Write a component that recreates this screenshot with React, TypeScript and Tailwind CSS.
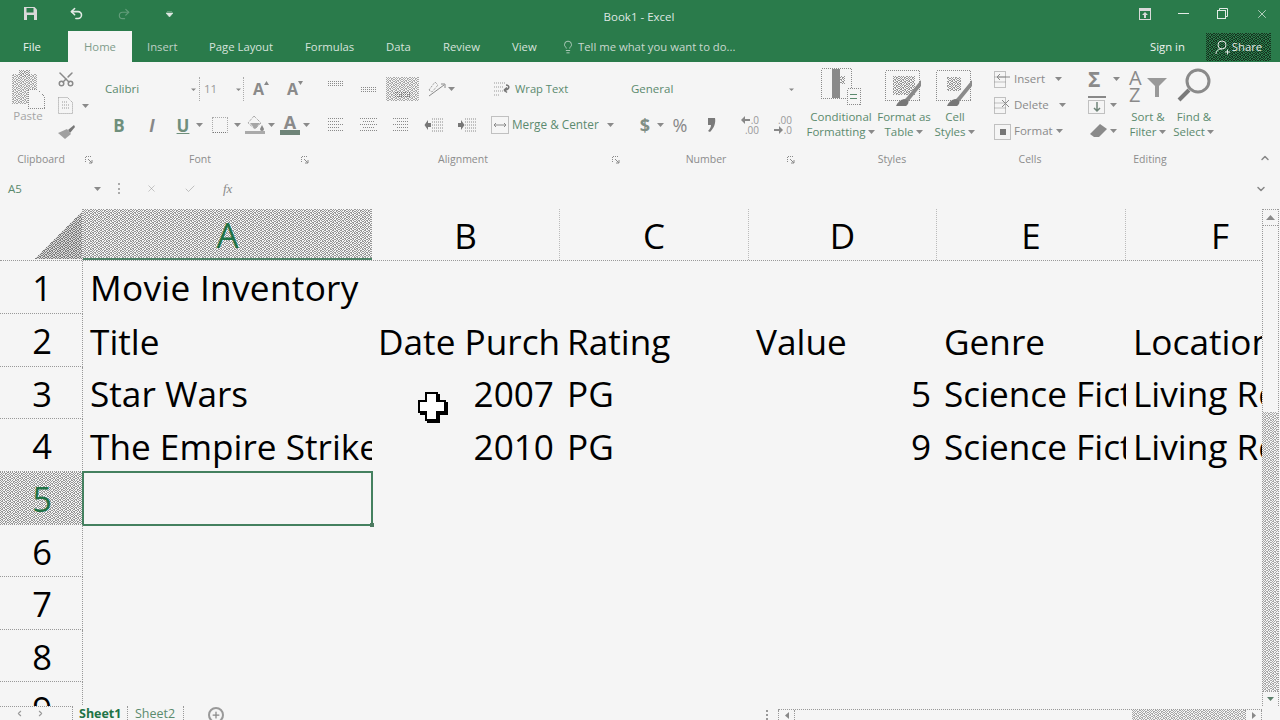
import React from 'react';
import { Scissors, Undo2, Redo2, X, Check, Lightbulb, ChevronUp, ChevronDown, Plus, ChevronLeft, ChevronRight } from 'lucide-react';

const GREY = '#8a8a8a';

// irregular checker, the screenshot is dithered rather than a clean grid
const NOISE = [
  '10101001',
  '01010110',
  '10100101',
  '01011010',
  '10101001',
  '01100110',
  '10011010',
  '01100101',
];

const Tile = ({ id, on, off }: { id: string; on: string; off: string }) => (
  <pattern id={id} width="8" height="8" patternUnits="userSpaceOnUse">
    <rect width="8" height="8" fill={off} />
    {NOISE.map((row, y) =>
      row.split('').map((c, x) => (c === '1' ? <rect key={`${x}-${y}`} x={x} y={y} width="1" height="1" fill={on} /> : null)),
    )}
  </pattern>
);

const Patterns = () => (
  <svg className="absolute w-0 h-0" shapeRendering="crispEdges">
    <defs>
      <Tile id="dith" on="#969696" off="#f5f5f5" />
      <Tile id="dithDark" on="#7c7c7c" off="#d8d8d8" />
      <Tile id="dithLight" on="#a8a8a8" off="#f5f5f5" />
      <Tile id="dithGreen" on="#16331f" off="#2a7b4b" />
    </defs>
  </svg>
);

const Dither = ({ id = 'dith' }: { id?: string }) => (
  <svg className="absolute inset-0 w-full h-full" shapeRendering="crispEdges">
    <rect width="100%" height="100%" fill={`url(#${id})`} />
  </svg>
);

const Caret = ({ className = '' }: { className?: string }) => (
  <div className={`w-[8px] h-[8px] flex items-center justify-center shrink-0 ${className}`}>
    <svg width="7" height="4" viewBox="0 0 7 4"><path d="M0 0h7L3.500 4z" fill={GREY} /></svg>
  </div>
);

const Lines = ({ rows, dark }: { rows: number[][]; dark?: boolean }) => (
  <svg width="20" height="20" viewBox="0 0 20 20" fill="none" stroke={dark ? '#777' : GREY} strokeWidth="1" strokeDasharray="1 1">
    {rows.map((r, i) => (
      <path key={i} d={`M${r[0]} ${r[2]}.5H${r[1]}`} />
    ))}
  </svg>
);

const TOP = [[2, 18, 2], [2, 18, 4], [2, 18, 6]];
const MID = [[2, 18, 8], [2, 18, 10], [2, 18, 12]];
const HIBOT = [[2, 18, 13], [2, 18, 15], [2, 18, 17]];
const LEFT = [[2, 18, 3], [2, 14, 6], [2, 18, 9], [2, 14, 12], [2, 18, 15]];
const CENTER = [[1, 19, 3], [4, 16, 6], [1, 19, 9], [4, 16, 12], [1, 19, 15]];
const RIGHT = [[2, 18, 3], [6, 18, 6], [2, 18, 9], [6, 18, 12], [2, 18, 15]];

const Indent = ({ flip }: { flip?: boolean }) => (
  <svg width="20" height="16" viewBox="0 0 20 16" fill="none">
    <path d="M8 2h11M8 5h11M8 8h11M8 11h11M8 14h11" stroke={GREY} strokeDasharray="1 1" />
    <path d={flip ? 'M1 6h3V3l3.500 5L4 13v-3H1z' : 'M7 6H4V3L0.500 8 4 13v-3h3z'} fill="#777" />
  </svg>
);

const BrushIcon = ({ wide }: { wide?: boolean }) => (
  <svg width="42" height="40" viewBox="0 0 42 40" fill="none" shapeRendering="crispEdges">
    <rect x="2.500" y="2.500" width="34" height="30" stroke={GREY} strokeDasharray="1 1" />
    <rect x={wide ? 10 : 13} y={wide ? 8 : 9} width={wide ? 22 : 14} height={wide ? 19 : 14} fill="url(#dith)" />
    <path d="M38 12L24 29l-3 3 4 2 13-16z" fill="#8a8a8a" shapeRendering="auto" />
    <path d="M21 31c-4 1-7 4-8 7h10c3-2 3-5 1-6z" fill="#777" shapeRendering="auto" />
  </svg>
);

const LaunchIcon = () => (
  <svg width="8" height="8" viewBox="0 0 8 8" fill="none" stroke={GREY}>
    <path d="M0.500 6V.5H6" strokeDasharray="1 1" />
    <path d="M3 3l4 4M7 4v3H4" />
  </svg>
);

const Label = ({ children, w, launchMl }: { children: string; w: string; launchMl?: string }) => (
  <div className="flex items-center h-[16px] mt-auto mb-[7px]">
    <div className={`${w} text-center text-[10.500px] text-[#8c8c8c]`}>{children}</div>
    {launchMl && <div className={launchMl}><LaunchIcon /></div>}
  </div>
);

const Big = ({ w, ml, icon, l1, l2, caret }: { w: string; ml?: string; icon: React.ReactNode; l1: string; l2: string; caret?: boolean }) => (
  <div className={`${w} ${ml ?? ''} flex flex-col items-center shrink-0`}>
    <div className="h-[40px] mt-[6px] flex items-start justify-center">{icon}</div>
    <div className="text-[11.500px] leading-[15px] text-[#5b8a6e] mt-[1px] whitespace-nowrap">{l1}</div>
    <div className="text-[11.500px] leading-[15px] text-[#5b8a6e] flex items-center whitespace-nowrap">
      {l2}
      {caret && <Caret className="ml-[2px]" />}
    </div>
  </div>
);

function Clipboard() {
  return (
    <div className="w-[97px] flex flex-col shrink-0">
      <div className="flex">
        <div className="w-[54px] flex flex-col items-center pl-[2px]">
          <svg width="34" height="40" viewBox="0 0 34 40" className="mt-[8px] -ml-[1px]" fill="none" shapeRendering="crispEdges">
            <rect x="1" y="4" width="25" height="30" fill="url(#dithLight)" />
            <rect x="8" y="0" width="11" height="7" fill="url(#dith)" />
            <path d="M17 19h9l7 7v12H17z" fill="#f5f5f5" stroke={GREY} strokeDasharray="1 1" />
          </svg>
          <div className="text-[11.500px] leading-[15px] -mt-[2px] text-[#a5a5a5]">Paste</div>
        </div>
        <div className="flex flex-col items-start mt-[8px] pl-[3px]">
          <Scissors size={18} color={GREY} className="-rotate-90" />
          <div className="flex items-center mt-[8px]">
            <svg width="18" height="19" viewBox="0 0 18 19" fill="none" stroke="#999" strokeDasharray="1 1">
              <path d="M1.500 1.500h9l5 5v11h-14z" />
              <path d="M5 6h6M5 9h8M5 12h8" />
            </svg>
            <Caret className="ml-[6px]" />
          </div>
          <svg width="18" height="14" viewBox="0 0 18 14" className="mt-[10px]">
            <path d="M11 5l6-5 1 2-5 6z" fill="#777" />
            <path d="M1 8l9-4 4 5-6 5z" fill="#a0a0a0" />
          </svg>
        </div>
      </div>
      <Label w="w-[82px]" launchMl="ml-[3px]">Clipboard</Label>
    </div>
  );
}

function Font() {
  return (
    <div className="w-[218px] flex flex-col shrink-0">
      <div className="pt-[14px] flex flex-col gap-[10px]">
        <div className="flex items-center h-[26px]">
          <div className="w-[102px] pl-[8px] flex items-center justify-between text-[11.500px] text-[#5b8a6e]">
            Calibri
            <svg width="5" height="5" viewBox="0 0 5 5" className="mr-[3px]"><path d="M0 1.500h5L2.500 4z" fill="#888" /></svg>
          </div>
          <div className="w-[45px] pl-[4px] flex items-center justify-between border-x border-dotted border-[#aaa] h-[24px] text-[11.500px] text-[#999]">
            11
            <svg width="5" height="5" viewBox="0 0 5 5" className="mr-[2px]"><path d="M0 1.500h5L2.500 4z" fill="#888" /></svg>
          </div>
          <div className="w-[24px] ml-[5px] flex justify-center items-start">
            <span className="text-[16px] font-bold text-[#8a8a8a] leading-none">A</span>
            <svg width="5" height="4" viewBox="0 0 5 4"><path d="M0 4h5L2.500 0z" fill="#888" /></svg>
          </div>
          <div className="w-[24px] ml-[10px] flex justify-center items-start">
            <span className="text-[16px] font-bold text-[#8a8a8a] leading-none">A</span>
            <svg width="5" height="4" viewBox="0 0 5 4"><path d="M0 0h5L2.500 4z" fill="#888" /></svg>
          </div>
        </div>
        <div className="flex items-center h-[26px]">
          <div className="w-[22px] ml-[11px] text-center text-[17px] font-bold text-[#6f8f7c] leading-none">B</div>
          <div className="w-[22px] ml-[11px] text-center text-[17px] font-bold italic text-[#888] leading-none">I</div>
          <div className="w-[22px] ml-[9px] text-center text-[17px] font-bold underline text-[#6f8f7c] leading-none">U</div>
          <Caret className="ml-[1px]" />
          <div className="w-[16px] h-[16px] ml-[9px] border border-dotted border-[#aaa] border-b-[#777]" />
          <Caret className="ml-[5px]" />
          <svg width="20" height="20" viewBox="0 0 20 20" className="ml-[4px]" fill="none">
            <path d="M9 1l7 7-6 6-7-6z" stroke={GREY} strokeDasharray="1 1" />
            <path d="M5 8h10l-5 6z" fill="#a5a5a5" />
            <path d="M17 10l2 4a2 2 0 01-4 0z" fill="#888" />
            <rect x="0" y="16" width="20" height="3" fill="#aaa" />
          </svg>
          <Caret className="ml-[2px]" />
          <div className="w-[20px] ml-[5px] flex flex-col items-center">
            <div className="text-[18px] leading-[15px] font-bold text-[#8a8a8a]">A</div>
            <div className="w-[20px] h-[5px] bg-[#6f8478]" />
          </div>
          <Caret className="ml-[2px]" />
        </div>
      </div>
      <Label w="w-[206px]" launchMl="-ml-[2px]">Font</Label>
    </div>
  );
}

function Alignment() {
  return (
    <div className="w-[308px] flex flex-col shrink-0">
      <div className="pt-[14px] flex flex-col gap-[10px]">
        <div className="flex items-center h-[26px]">
          <div className="ml-[11px]"><Lines rows={TOP} /></div>
          <div className="ml-[13px]"><Lines rows={MID} /></div>
          <div className="relative ml-[7px] w-[33px] h-[24px] flex items-center justify-center">
            <Dither id="dithLight" />
            <div className="relative"><Lines rows={HIBOT} dark /></div>
          </div>
          <svg width="20" height="18" viewBox="0 0 20 18" className="ml-[8px]" fill="none" stroke={GREY}>
            <path d="M2 16L17 5M14 4h4v4" />
            <path d="M2 10l6-8 3 3-6 7z" strokeDasharray="1 1" />
          </svg>
          <Caret />
          <svg width="20" height="16" viewBox="0 0 20 16" className="ml-[38px]" fill="none">
            <path d="M1 2h12M1 6h9M1 10h12M1 14h6" stroke="#999" strokeDasharray="1 1" />
            <path d="M11 9c6 0 6-5 2-5M11 9l3-2.500M11 9l3 2.500" stroke="#777" strokeWidth="1.500" />
          </svg>
          <div className="ml-[2px] text-[11.200px] text-[#5b8a6e] whitespace-nowrap">Wrap Text</div>
        </div>
        <div className="flex items-center h-[26px]">
          <div className="ml-[11px]"><Lines rows={LEFT} /></div>
          <div className="ml-[13px]"><Lines rows={CENTER} /></div>
          <div className="ml-[12px]"><Lines rows={RIGHT} /></div>
          <div className="ml-[13px]"><Indent /></div>
          <div className="ml-[13px]"><Indent flip /></div>
          <svg width="18" height="18" viewBox="0 0 18 18" className="ml-[14px]" fill="none" stroke={GREY}>
            <rect x=".5" y=".5" width="17" height="17" strokeDasharray="1 1" />
            <path d="M3 9h12M5 7L3 9l2 2M13 7l2 2-2 2" />
          </svg>
          <div className="ml-[3px] text-[11.800px] text-[#5b8a6e] whitespace-nowrap">Merge &amp; Center</div>
          <Caret className="ml-[8px]" />
        </div>
      </div>
      <Label w="w-[296px]" launchMl="ml-[1px]">Alignment</Label>
    </div>
  );
}

const ShiftIcon = ({ right }: { right?: boolean }) => (
  <svg width="9" height="8" viewBox="0 0 9 8">
    <path d={right ? 'M0 3h5V0l4 4-4 4V5H0z' : 'M9 3H4V0L0 4l4 4V5h5z'} fill="#888" />
  </svg>
);

function Num() {
  return (
    <div className="w-[177px] flex flex-col shrink-0">
      <div className="pt-[14px] flex flex-col gap-[10px]">
        <div className="flex items-center h-[26px]">
          <div className="w-[173px] pl-[8px] pr-[2px] flex items-center justify-between text-[11.500px] text-[#5b8a6e]">
            General
            <svg width="5" height="5" viewBox="0 0 5 5"><path d="M0 1.500h5L2.500 4z" fill="#888" /></svg>
          </div>
        </div>
        <div className="flex items-center h-[26px]">
          <div className="w-[20px] ml-[12px] text-center text-[18px] font-bold text-[#7f8f85] leading-none">$</div>
          <Caret className="ml-[1px]" />
          <div className="w-[24px] ml-[4px] text-center text-[18px] text-[#888] leading-none">%</div>
          <svg width="20" height="14" viewBox="0 0 20 14" className="ml-[10px]">
            <path d="M6 0h7c1 5-1 10-5 14l-2-1c2-2 3-4 3-6H6z" fill="#7a7a7a" />
          </svg>
          <div className="w-[26px] ml-[11px] flex flex-col items-end text-[10px] leading-[10px] text-[#999]">
            <div className="flex items-center gap-[1px]"><ShiftIcon /><span>.0</span></div>
            <span>.00</span>
          </div>
          <div className="w-[26px] ml-[7px] flex flex-col items-end text-[10px] leading-[10px] text-[#999]">
            <span>.00</span>
            <div className="flex items-center gap-[1px]"><ShiftIcon right /><span>.0</span></div>
          </div>
        </div>
      </div>
      <Label w="w-[166px]" launchMl="-ml-[2px]">Number</Label>
    </div>
  );
}

function Styles() {
  return (
    <div className="w-[185px] flex flex-col shrink-0">
      <div className="flex">
        <Big
          w="w-[70px]"
          ml="ml-[6px]"
          l1="Conditional"
          l2="Formatting"
          caret
          icon={
            <svg width="40" height="38" viewBox="0 0 40 38" fill="none" shapeRendering="crispEdges">
              <rect x=".5" y=".5" width="30" height="30" stroke={GREY} strokeDasharray="1 1" />
              <path d="M11 1h8v29h-8z" fill="#8a8a8a" />
              <path d="M19 8h5v8h-5z" fill="url(#dith)" />
              <rect x="26.500" y="20.500" width="13" height="16" fill="#f5f5f5" stroke={GREY} strokeDasharray="1 1" />
              <path d="M29 26h7M29 30h7" stroke="#5b8a6e" />
            </svg>
          }
        />
        <Big w="w-[56px]" l1="Format as" l2="Table" caret icon={<BrushIcon wide />} />
        <Big w="w-[46px]" l1="Cell" l2="Styles" caret icon={<BrushIcon />} />
      </div>
      <Label w="w-[184px]">Styles</Label>
    </div>
  );
}

const CellRow = ({ icon, text, caretMl }: { icon: React.ReactNode; text: string; caretMl: string }) => (
  <div className="flex items-center h-[26px]">
    <div className="w-[29px] pl-[9px] flex items-center">{icon}</div>
    <div className="text-[11.500px] text-[#8a8a8a]">{text}</div>
    <Caret className={caretMl} />
  </div>
);

function Cells() {
  const box = (
    <svg width="17" height="17" viewBox="0 0 17 17" fill="none" stroke={GREY}>
      <path d="M.5.5h11v16H.5zM.5 6h11M.5 11h11" strokeDasharray="1 1" />
      <path d="M3 6h13M6 3L3 6l3 3" />
    </svg>
  );
  const del = (
    <svg width="17" height="17" viewBox="0 0 17 17" fill="none" stroke={GREY}>
      <path d="M.5.5h11v16H.5zM.5 6h11M.5 11h11" strokeDasharray="1 1" />
      <path d="M8 3l7 7M15 3l-7 7" />
    </svg>
  );
  const fmt = (
    <svg width="18" height="18" viewBox="0 0 18 18" fill="none" stroke={GREY}>
      <rect x=".5" y="2.500" width="16" height="15" strokeDasharray="1 1" />
      <rect x="6" y="7" width="6" height="6" fill="#777" stroke="none" />
    </svg>
  );
  return (
    <div className="w-[95px] flex flex-col shrink-0">
      <div className="pt-[4px] flex flex-col">
        <CellRow icon={box} text="Insert" caretMl="ml-[9px]" />
        <CellRow icon={del} text="Delete" caretMl="ml-[10px]" />
        <CellRow icon={fmt} text="Format" caretMl="ml-[3px]" />
      </div>
      <Label w="w-[90px]">Cells</Label>
    </div>
  );
}

function Editing() {
  return (
    <div className="w-[145px] flex flex-col shrink-0">
      <div className="flex">
        <div className="w-[42px] pl-[8px] pt-[4px] flex flex-col">
          <div className="flex items-center h-[26px]">
            <div className="w-[16px] text-[21px] font-bold text-[#8a8a8a] leading-none">Σ</div>
            <Caret className="ml-[8px]" />
          </div>
          <div className="flex items-center h-[26px]">
            <svg width="18" height="18" viewBox="0 0 18 18" fill="none">
              <path d="M0 1h18" stroke="#888" strokeWidth="2" />
              <rect x=".5" y="4.500" width="16" height="13" stroke={GREY} strokeDasharray="1 1" />
              <path d="M9 6v9M6 12l3 3 3-3" stroke="#6f8478" strokeWidth="1.500" />
            </svg>
            <Caret className="ml-[3px]" />
          </div>
          <div className="flex items-center h-[26px]">
            <svg width="20" height="15" viewBox="0 0 20 15">
              <path d="M12 0l7 5-8 8H6l-4-3z" fill="#8a8a8a" />
            </svg>
            <Caret className="ml-[1px]" />
          </div>
        </div>
        <Big
          w="w-[52px]"
          l1="Sort &"
          l2="Filter"
          caret
          icon={
            <div className="flex">
              <div className="flex flex-col text-[20px] font-normal text-[#8a8a8a] leading-[17px] w-[18px] mt-[1px]"><span>A</span><span>Z</span></div>
              <svg width="20" height="20" viewBox="0 0 20 20" className="mt-[10px]">
                <path d="M0 0h20l-8 8v11H8V8z" fill="#999" />
              </svg>
            </div>
          }
        />
        <Big
          w="w-[44px]"
          ml="-ml-[2px]"
          l1="Find &"
          l2="Select"
          caret
          icon={
            <svg width="36" height="36" viewBox="0 0 36 36" fill="none" className="-mt-[1px]">
              <circle cx="22" cy="14" r="11" stroke={GREY} strokeWidth="3" />
              <path d="M13 23L3 33" stroke="#7a7a7a" strokeWidth="4" />
            </svg>
          }
        />
      </div>
      <Label w="w-[140px]">Editing</Label>
    </div>
  );
}

const COLS = 'grid-cols-[83px_289px_188px_189px_188px_189px_188px]';
const TXT = 'text-[35.200px] text-black leading-none whitespace-nowrap overflow-hidden';

const rows: { n: number; cells: (string | null)[] }[] = [
  { n: 1, cells: ['Movie Inventory', null, null, null, null, null] },
  { n: 2, cells: ['Title', 'Date Purch', 'Rating', 'Value', 'Genre', 'Location'] },
  { n: 3, cells: ['Star Wars', '2007', 'PG', '5', 'Science Fiction', 'Living Room'] },
  { n: 4, cells: ['The Empire Strikes Back', '2010', 'PG', '9', 'Science Fiction', 'Living Room'] },
  { n: 5, cells: [null, null, null, null, null, null] },
  { n: 6, cells: [null, null, null, null, null, null] },
  { n: 7, cells: [null, null, null, null, null, null] },
  { n: 8, cells: [null, null, null, null, null, null] },
  { n: 9, cells: [null, null, null, null, null, null] },
];

function Sheet() {
  return (
    <div className="relative flex-1 flex min-h-0 overflow-hidden">
      <div className="w-[1262px] flex flex-col overflow-hidden">
        <div className={`grid ${COLS} h-[52px] shrink-0 border-b border-dotted border-[#999]`}>
          <div className="border-r border-dotted border-[#999] flex items-end justify-end pb-[1px]">
            <svg width="48" height="48" viewBox="0 0 48 48" shapeRendering="crispEdges">
              <path d="M48 0v48H0z" fill="url(#dithDark)" />
            </svg>
          </div>
          {['A', 'B', 'C', 'D', 'E', 'F'].map((c, i) => (
            <div
              key={c}
              className={`relative flex items-center justify-center pt-[2px] text-[35px] leading-none ${
                i === 0 ? 'text-[#217346] border-b-2 border-[#4d8266]' : 'text-black'
              } ${i > 0 && i < 5 ? 'border-r border-dotted border-[#bbb]' : ''}`}
            >
              {i === 0 && <Dither />}
              <span className="relative">{c}</span>
            </div>
          ))}
        </div>
        <div className={`grid ${COLS} grid-rows-[53px_53px_52px_53px_53px_52px_53px_52px_53px] flex-1 min-h-0 overflow-hidden`}>
          {rows.map((r) => (
            <React.Fragment key={r.n}>
              <div
                className={`relative flex items-center justify-center pl-[2px] pt-[3px] text-[34.500px] leading-none border-r border-b border-dotted border-[#999] ${
                  r.n === 5 ? 'text-[#217346]' : 'text-black'
                }`}
              >
                {r.n === 5 && <Dither />}
                <span className="relative">{r.n}</span>
              </div>
              {r.cells.map((c, i) => {
                const num = c !== null && /^\d+$/.test(c);
                const selected = r.n === 5 && i === 0;
                return (
                  <div
                    key={i}
                    className={`flex items-center ${r.n === 1 ? 'pt-[1px] tracking-[0.3px]' : 'pt-[2px]'} ${TXT} ${num ? 'justify-end pr-[6px]' : c === 'Date Purch' ? 'pl-[6px]' : 'pl-[7px]'} ${
                      selected ? 'border-2 border-[#44805f] relative overflow-visible -m-[1px]' : ''
                    } ${r.n === 1 && i === 0 ? 'overflow-visible' : ''}`}
                  >
                    {c}
                    {selected && <div className="absolute -right-[3px] -bottom-[3px] w-[4px] h-[4px] bg-[#4d7a60]" />}
                  </div>
                );
              })}
            </React.Fragment>
          ))}
        </div>
      </div>
      {/* vertical scrollbar */}
      <div className="w-[17px] flex flex-col border-x border-dotted border-[#999]">
        <div className="h-[17px] shrink-0 flex items-center justify-center border-y border-dotted border-[#999]">
          <svg width="9" height="5" viewBox="0 0 9 5"><path d="M0 5h9L4.500 0z" fill="#8a8a8a" /></svg>
        </div>
        <div className="flex-1" />
        <div className="relative h-[279px] shrink-0"><Dither id="dithLight" /></div>
        <div className="h-[15px] shrink-0 flex items-center justify-center border-t border-dotted border-[#999]">
          <svg width="7" height="4" viewBox="0 0 7 4"><path d="M0 0h7L3.500 4z" fill="#5b7f6a" /></svg>
        </div>
      </div>
      {/* mouse pointer over the sheet */}
      <svg width="32" height="34" viewBox="0 0 32 34" className="absolute left-[417px] top-[182px]" shapeRendering="crispEdges">
        <rect x="10" y="3" width="13" height="29" fill="#000" />
        <rect x="3" y="11" width="28" height="13" fill="#000" />
        <rect x="8" y="1" width="13" height="29" fill="#000" />
        <rect x="1" y="9" width="28" height="13" fill="#000" />
        <rect x="10" y="3" width="9" height="25" fill="#fff" />
        <rect x="3" y="11" width="24" height="9" fill="#fff" />
      </svg>
    </div>
  );
}

function BottomBar() {
  return (
    <div className="h-[14px] shrink-0 flex items-start overflow-hidden">
      <div className="w-[73px] h-[14px] flex items-center pl-[15px] gap-[12px] border-t border-r border-dotted border-[#999]">
        <ChevronLeft size={9} color="#999" strokeWidth={3} />
        <ChevronRight size={9} color="#999" strokeWidth={3} />
      </div>
      <div className="w-[55px] h-[14px] pl-[6px] text-[12.500px] leading-[16px] font-bold text-[#217346] border-r border-dotted border-[#999]">Sheet1</div>
      <div className="w-[56px] h-[14px] pl-[7px] text-[12.500px] leading-[16px] text-[#5b8a6e] border-r border-dotted border-[#999]">Sheet2</div>
      <div className="ml-[24px] w-[16px] h-[16px] mt-[1px] rounded-full border-2 border-[#999] flex items-center justify-center shrink-0">
        <Plus size={10} strokeWidth={3} color="#888" />
      </div>
      <div className="ml-[542px] w-[4px] h-[10px] mt-[4px] border-l-2 border-dotted border-[#999]" />
      {/* horizontal scrollbar */}
      <div className="ml-[8px] mt-[3px] w-[484px] h-[11px] shrink-0 flex border-t border-dotted border-[#999]">
        <div className="w-[17px] flex items-center justify-center border-x border-dotted border-[#999]">
          <svg width="4" height="7" viewBox="0 0 4 7"><path d="M4 0v7L0 3.500z" fill="#888" /></svg>
        </div>
        <div className="w-[337px]" />
        <div className="relative w-[113px]"><Dither id="dithLight" /></div>
        <div className="w-[17px] flex items-center justify-center border-x border-dotted border-[#999]">
          <svg width="4" height="7" viewBox="0 0 4 7"><path d="M0 0v7l4-3.500z" fill="#888" /></svg>
        </div>
      </div>
    </div>
  );
}

export default function App() {
  return (
    <div className="w-[1280px] h-[720px] overflow-hidden flex flex-col bg-[#f5f5f5] font-['Open_Sans',sans-serif]">
      <Patterns />
      {/* title bar */}
      <div className="h-[31px] shrink-0 bg-[#2a7b4b] flex items-center pb-[4px] text-[#e3ebe6]">
        <svg width="13" height="13" viewBox="0 0 13 13" className="ml-[24px]">
          <path d="M0 0h10.500L13 2.500V13H0z" fill="#d9d9d9" />
          <rect x="2.500" y="1" width="7" height="4.500" fill="#2a7b4b" />
          <rect x="3" y="8" width="7" height="5" fill="#2a7b4b" />
        </svg>
        <Undo2 size={15} className="ml-[32px]" strokeWidth={2.500} />
        <Redo2 size={14} className="ml-[33px] opacity-30" />
        <svg width="7" height="6" viewBox="0 0 7 6" className="ml-[35px]">
          <path d="M1 0h5M0 2h7l-3.500 4z" fill="#dfe8e3" stroke="#dfe8e3" strokeWidth=".6" />
        </svg>
        <div className="ml-[415px] mt-[7px] w-[102px] text-center text-[11.500px] text-[#dfe8e3]">Book1 - Excel</div>
        <svg width="12" height="12" viewBox="0 0 12 12" className="ml-[449px]">
          <rect width="12" height="12" fill="#d9d9d9" />
          <rect x="1" y="3" width="10" height="8" fill="#2a7b4b" />
          <path d="M6 4l3 3H7v3H5V7H3z" fill="#d9d9d9" />
        </svg>
        <div className="ml-[27px] w-[11px] h-[1px] bg-[#e3ebe6]" />
        <svg width="11" height="11" viewBox="0 0 11 11" className="ml-[28px]" fill="none" stroke="#e3ebe6">
          <rect x=".5" y="2.500" width="8" height="8" />
          <path d="M2.500 2.500v-2h8v8h-2" />
        </svg>
        <X size={14} className="ml-[27px]" strokeWidth={1.250} />
      </div>
      {/* tab row */}
      <div className="h-[31px] shrink-0 bg-[#2a7b4b] flex items-end text-[11.300px] text-[#d7e3dc] whitespace-nowrap">
        <div className="ml-[23px] w-[19px] h-[31px] leading-[31px] text-[#eef3f0]">File</div>
        <div className="ml-[26px] w-[64px] h-[31px] leading-[31px] bg-[#f5f5f5] text-center text-[#7f9c8b]">Home</div>
        <div className="ml-[15px] w-[31px] h-[31px] leading-[31px] text-[#bfd0c6]">Insert</div>
        <div className="ml-[31px] w-[65px] h-[31px] leading-[31px]">Page Layout</div>
        <div className="ml-[31px] w-[48px] h-[31px] leading-[31px]">Formulas</div>
        <div className="ml-[33px] w-[25px] h-[31px] leading-[31px]">Data</div>
        <div className="ml-[32px] w-[38px] h-[31px] leading-[31px]">Review</div>
        <div className="ml-[31px] w-[26px] h-[31px] leading-[31px]">View</div>
        <Lightbulb size={14} className="ml-[23px] mb-[8px]" strokeWidth={1.250} />
        <div className="ml-[3px] w-[160px] h-[31px] leading-[31px] text-[#c9d8cf]">Tell me what you want to do...</div>
        <div className="ml-[412px] h-[31px] leading-[31px] text-[#eef3f0] w-[38px]">Sign in</div>
        <div className="relative ml-[18px] mb-[1px] w-[65px] h-[28px] flex items-center justify-center gap-[2px] text-[#e3ebe6]">
          <Dither id="dithGreen" />
          <svg width="15" height="15" viewBox="0 0 15 15" fill="none" stroke="#e3ebe6" className="relative">
            <circle cx="7" cy="5" r="4" />
            <path d="M1 14c0-3 2-5 6-5M10 12h5M12.500 9.500v5" />
          </svg>
          <span className="relative">Share</span>
        </div>
      </div>
      {/* ribbon */}
      <div className="h-[113px] shrink-0 flex">
        <Clipboard />
        <Font />
        <Alignment />
        <Num />
        <Styles />
        <Cells />
        <Editing />
        <div className="flex-1 pl-[34px] pt-[90px]">
          <ChevronUp size={12} color="#888" strokeWidth={3} />
        </div>
      </div>
      {/* formula bar */}
      <div className="h-[34px] shrink-0 flex items-center pb-[7px] text-[#8a8a8a]">
        <div className="ml-[8px] w-[85px] text-[11.500px] text-[#5b8a6e]">A5</div>
        <Caret />
        <div className="ml-[17px] w-[2px] h-[11px] border-l-2 border-dotted border-[#aaa]" />
        <X size={11} className="ml-[26px]" strokeWidth={1} />
        <Check size={12} className="ml-[27px]" strokeWidth={1} />
        <div className="ml-[27px] text-[13px] italic font-['Liberation_Serif',serif] leading-none">fx</div>
        <ChevronDown size={12} strokeWidth={3} color="#888" className="ml-[1023px]" />
      </div>
      <Sheet />
      <BottomBar />
    </div>
  );
}
